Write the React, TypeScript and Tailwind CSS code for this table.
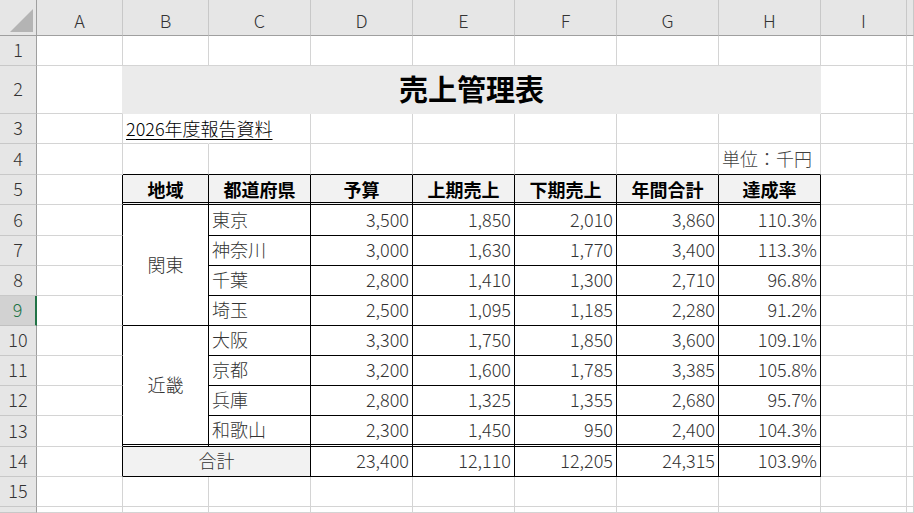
import React from "react";

const GC = ["", "col-start-1", "col-start-2", "col-start-3", "col-start-4", "col-start-5", "col-start-6", "col-start-7", "col-start-8", "col-start-9", "col-start-10", "col-start-11"];
const GR = ["", "row-start-1", "row-start-2", "row-start-3", "row-start-4", "row-start-5", "row-start-6", "row-start-7", "row-start-8", "row-start-9", "row-start-10", "row-start-11", "row-start-12", "row-start-13", "row-start-14", "row-start-15", "row-start-16", "row-start-17"];
const CS: Record<number, string> = { 1: "col-span-1", 2: "col-span-2", 7: "col-span-7" };
const RS: Record<number, string> = { 1: "row-span-1", 4: "row-span-4" };

const LETTERS = ["A", "B", "C", "D", "E", "F", "G", "H", "I", ""];

const data: string[][] = [
  ["東京", "3,500", "1,850", "2,010", "3,860", "110.3%"],
  ["神奈川", "3,000", "1,630", "1,770", "3,400", "113.3%"],
  ["千葉", "2,800", "1,410", "1,300", "2,710", "96.8%"],
  ["埼玉", "2,500", "1,095", "1,185", "2,280", "91.2%"],
  ["大阪", "3,300", "1,750", "1,850", "3,600", "109.1%"],
  ["京都", "3,200", "1,600", "1,785", "3,385", "105.8%"],
  ["兵庫", "2,800", "1,325", "1,355", "2,680", "95.7%"],
  ["和歌山", "2,300", "1,450", "950", "2,400", "104.3%"],
];
const total = ["23,400", "12,110", "12,205", "24,315", "103.9%"];
const heads = ["地域", "都道府県", "予算", "上期売上", "下期売上", "年間合計", "達成率"];

type Desc = {
  r: number;
  c: number;
  cs?: number;
  rs?: number;
  text?: string;
  align?: "l" | "r" | "c";
  kind?: "title" | "head" | "data" | "sub" | "unit";
  bg?: string;
  rightOverride?: string;
  bottomOverride?: string;
};

function buildCells(): Desc[] {
  const cells: Desc[] = [];
  const covered = new Set<string>();
  const add = (d: Desc) => {
    const cs = d.cs ?? 1;
    const rs = d.rs ?? 1;
    for (let i = 0; i < rs; i++)
      for (let j = 0; j < cs; j++) covered.add(`${d.r + i}-${d.c + j}`);
    cells.push(d);
  };
  add({ r: 2, c: 2, cs: 7, text: "売上管理表", align: "c", kind: "title", bg: "bg-[#ebebeb]", rightOverride: "border-r-[#ebebeb]", bottomOverride: "border-b-[#ebebeb]" });
  add({ r: 2, c: 1, rightOverride: "border-r-[#ebebeb]" });
  add({ r: 3, c: 2, text: "2026年度報告資料", align: "l", kind: "sub", rightOverride: "border-r-transparent" });
  add({ r: 4, c: 8, text: "単位：千円", align: "r", kind: "unit" });
  heads.forEach((h, i) => add({ r: 5, c: 2 + i, text: h, align: "c", kind: "head", bg: "bg-[#f2f2f2]" }));
  add({ r: 6, c: 2, rs: 4, text: "関東", align: "c", kind: "data" });
  add({ r: 10, c: 2, rs: 4, text: "近畿", align: "c", kind: "data" });
  data.forEach((row, i) => {
    add({ r: 6 + i, c: 3, text: row[0], align: "l", kind: "data" });
    row.slice(1).forEach((v, j) => add({ r: 6 + i, c: 4 + j, text: v, align: "r", kind: "data" }));
  });
  add({ r: 14, c: 2, cs: 2, text: "合計", align: "c", kind: "data", bg: "bg-[#f2f2f2]" });
  total.forEach((v, j) => add({ r: 14, c: 4 + j, text: v, align: "r", kind: "data" }));
  for (let r = 1; r <= 16; r++)
    for (let c = 1; c <= 10; c++) if (!covered.has(`${r}-${c}`)) cells.push({ r, c });
  return cells;
}

function cellClasses(d: Desc): string {
  const cs = d.cs ?? 1;
  const rs = d.rs ?? 1;
  const rightCol = d.c + cs - 1;
  const bottomRow = d.r + rs - 1;
  const cls: string[] = [GC[d.c + 1], GR[d.r + 1], CS[cs], RS[rs], "flex items-center whitespace-nowrap min-w-0 overflow-visible"];
  const rightBlack = d.r >= 5 && d.r <= 14 && rightCol >= 1 && rightCol <= 8;
  const inTableCols = d.c >= 2 && d.c <= 8;
  const bottomBlack = inTableCols && bottomRow >= 4 && bottomRow <= 14;
  const dbl = inTableCols && (bottomRow === 5 || bottomRow === 13);
  cls.push("border-r");
  cls.push(d.rightOverride ?? (rightBlack ? "border-r-black" : "border-r-[#d4d4d4]"));
  if (dbl) {
    cls.push("border-b-[3px] border-double border-b-black");
  } else {
    cls.push("border-b");
    cls.push(d.bottomOverride ?? (bottomBlack ? "border-b-black" : "border-b-[#d4d4d4]"));
  }
  if (d.bg) cls.push(d.bg);
  if (d.align === "l") cls.push("justify-start pl-[3px]");
  if (d.align === "r") cls.push(d.kind === "unit" ? "justify-end pr-[8px]" : "justify-end pr-[3px]");
  if (d.align === "c") cls.push("justify-center");
  switch (d.kind) {
    case "title":
      cls.push("text-[29px] font-bold text-black pb-[2px]");
      break;
    case "head":
      cls.push("text-[18px] font-bold text-black");
      break;
    case "sub":
      cls.push("text-[18px] font-light text-black relative z-10 pb-[2px]");
      break;
    case "unit":
      cls.push("text-[18px] font-light text-[#404040] pb-[2px]");
      break;
    case "data":
      cls.push("text-[18px] font-light text-[#333] pb-[3px]");
      break;
  }
  return cls.join(" ");
}

export default function App() {
  const cells = buildCells();
  const rowNums = Array.from({ length: 16 }, (_, i) => i + 1);
  return (
    <div className="w-[914px] h-[513px] overflow-hidden bg-white font-['Noto_Sans_CJK_JP',_sans-serif] leading-none">
      <div className="grid h-[513px] grid-cols-[37px_86px_86px_102px_102px_102px_102px_102px_102px_86px_1fr] grid-rows-[36px_30px_48px_30px_31px_30px_31px_30px_30px_30px_30px_30px_30px_31px_30px_30px_1fr]">
        <div className="col-start-1 row-start-1 relative bg-[#e6e6e6] border-r border-b border-r-[#9f9f9f] border-b-[#9f9f9f]">
          <svg className="absolute right-[3px] bottom-[3px]" width="23" height="23" viewBox="0 0 23 23">
            <polygon points="23,0 23,23 0,23" fill="#b4b4b4" />
          </svg>
        </div>
        {LETTERS.map((L, i) => (
          <div
            key={"h" + i}
            className={`${GC[i + 2]} row-start-1 flex items-center justify-center pt-[5px] bg-[#e6e6e6] border-r border-r-[#c8c8c8] border-b border-b-[#9f9f9f] text-[18px] font-light text-[#333]`}
          >
            {L}
          </div>
        ))}
        {rowNums.map((n) => (
          <div
            key={"r" + n}
            className={`col-start-1 ${GR[n + 1]} flex items-center justify-center pb-[3px] border-b ${
              n === 9
                ? "bg-[#d2d2d2] text-[#217346] border-r-2 border-r-[#217346] border-b-[#c0c0c0]"
                : "bg-[#e6e6e6] text-[#333] border-r border-r-[#9f9f9f] border-b-[#c8c8c8]"
            } text-[18px] font-light`}
          >
            {n <= 15 ? n : ""}
          </div>
        ))}
        {cells.map((d) => (
          <div key={`${d.r}-${d.c}`} className={cellClasses(d)}>
            {d.kind === "sub" ? <span className="underline underline-offset-[3px]">{d.text}</span> : d.text}
          </div>
        ))}
      </div>
    </div>
  );
}
